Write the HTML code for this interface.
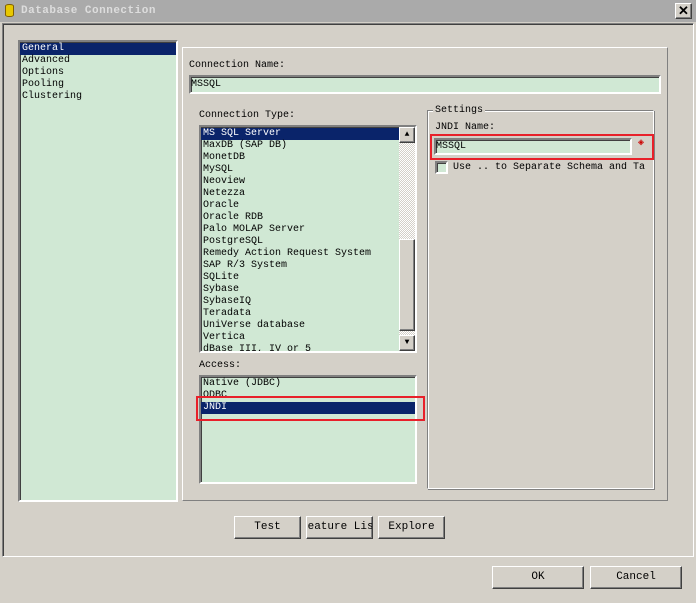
<!DOCTYPE html><html><head><style>
*{margin:0;padding:0;box-sizing:border-box}
body{width:696px;height:603px;background:#d4d0c8;font:10px/12px "Liberation Mono",monospace;color:#000;position:relative;overflow:hidden}
.a{position:absolute}
.list{background:#d0e8d4;border:2px solid;border-color:#808080 #fff #fff #808080;box-shadow:inset 1px 1px 0 #404040}
.row{height:12px;padding-left:2px;white-space:nowrap}
.sel{background:#0a246a;color:#fff}
.btn{position:absolute;background:#d4d0c8;border:1px solid;border-color:#fff #404040 #404040 #fff;box-shadow:inset -1px -1px 0 #808080;text-align:center;line-height:20px;font-size:11px;overflow:hidden;white-space:nowrap}
.raised{border:1px solid;border-color:#fff #808080 #808080 #fff}
</style></head><body>
<div class="a" style="left:0;top:0;width:696px;height:22px;background:#aaa"></div>
<div class="a" style="left:5px;top:4px;width:9px;height:13px;background:#e8c800;border:1px solid #806000;border-radius:4px/2px"></div>
<div class="a" style="left:21px;top:5px;font:bold 11px/12px 'Liberation Mono',monospace;color:#ddd;letter-spacing:0.5px">Database Connection</div>
<div class="btn" style="left:675px;top:3px;width:17px;height:16px;line-height:14px;font:bold 13px/14px 'Liberation Sans',sans-serif">✕</div>
<div class="a" style="left:2px;top:23px;width:692px;height:534px;border:1px solid;border-color:#808080 #fff #fff #808080;box-shadow:inset 1px 1px 0 #404040"></div>
<div class="a list" style="left:18px;top:40px;width:160px;height:462px;padding-top:1px">
<div class="row sel">General</div><div class="row">Advanced</div><div class="row">Options</div><div class="row">Pooling</div><div class="row">Clustering</div></div>
<div class="a raised" style="left:182px;top:47px;width:486px;height:454px"></div>
<div class="a" style="left:189px;top:60px">Connection Name:</div>
<div class="a list" style="left:189px;top:75px;width:472px;height:19px;padding-top:2px">MSSQL</div>
<div class="a" style="left:199px;top:110px">Connection Type:</div>
<div class="a list" style="left:199px;top:125px;width:218px;height:228px;overflow:hidden;padding-top:1px">
<div class="row sel" style="width:198px">MS SQL Server</div><div class="row">MaxDB (SAP DB)</div><div class="row">MonetDB</div><div class="row">MySQL</div><div class="row">Neoview</div><div class="row">Netezza</div><div class="row">Oracle</div><div class="row">Oracle RDB</div><div class="row">Palo MOLAP Server</div><div class="row">PostgreSQL</div><div class="row">Remedy Action Request System</div><div class="row">SAP R/3 System</div><div class="row">SQLite</div><div class="row">Sybase</div><div class="row">SybaseIQ</div><div class="row">Teradata</div><div class="row">UniVerse database</div><div class="row">Vertica</div><div class="row">dBase III, IV or 5</div>
<div class="a" style="left:198px;top:0;width:16px;height:224px;background:repeating-conic-gradient(#d4d0c8 0 25%,#fff 0 50%) 0 0/2px 2px"></div>
<div class="btn" style="left:198px;top:0;width:16px;height:16px;line-height:14px;font-size:8px">▲</div>
<div class="btn" style="left:198px;top:112px;width:16px;height:92px"></div>
<div class="btn" style="left:198px;top:208px;width:16px;height:16px;line-height:14px;font-size:8px">▼</div>
</div>
<div class="a" style="left:199px;top:360px">Access:</div>
<div class="a list" style="left:199px;top:375px;width:218px;height:109px;padding-top:1px">
<div class="row">Native (JDBC)</div><div class="row">ODBC</div><div class="row sel">JNDI</div></div>
<div class="a" style="left:196px;top:396px;width:229px;height:25px;border:2px solid #e8202a"></div>
<div class="a" style="left:427px;top:110px;width:227px;height:379px;border:1px solid;border-color:#808080 #fff #fff #808080;box-shadow:inset 1px 1px 0 #fff,1px 1px 0 #808080"></div>
<div class="a" style="left:433px;top:105px;background:#d4d0c8;padding:0 2px">Settings</div>
<div class="a" style="left:435px;top:122px">JNDI Name:</div>
<div class="a list" style="left:434px;top:138px;width:198px;height:17px;padding-top:1px">MSSQL</div>
<div class="a" style="left:634px;top:138px;width:14px;height:14px;text-align:center;color:#c00;font-size:10px">◈</div>
<div class="a" style="left:430px;top:134px;width:224px;height:26px;border:2px solid #e8202a"></div>
<div class="a list" style="left:435px;top:161px;width:13px;height:13px"></div>
<div class="a" style="left:453px;top:162px;white-space:nowrap;width:194px;overflow:hidden">Use .. to Separate Schema and Ta</div>
<div class="btn" style="left:234px;top:516px;width:67px;height:23px">Test</div>
<div class="btn" style="left:306px;top:516px;width:67px;height:23px;text-indent:-6px">Feature List</div>
<div class="btn" style="left:378px;top:516px;width:67px;height:23px">Explore</div>
<div class="btn" style="left:492px;top:566px;width:92px;height:23px">OK</div>
<div class="btn" style="left:590px;top:566px;width:92px;height:23px">Cancel</div>
</body></html>
